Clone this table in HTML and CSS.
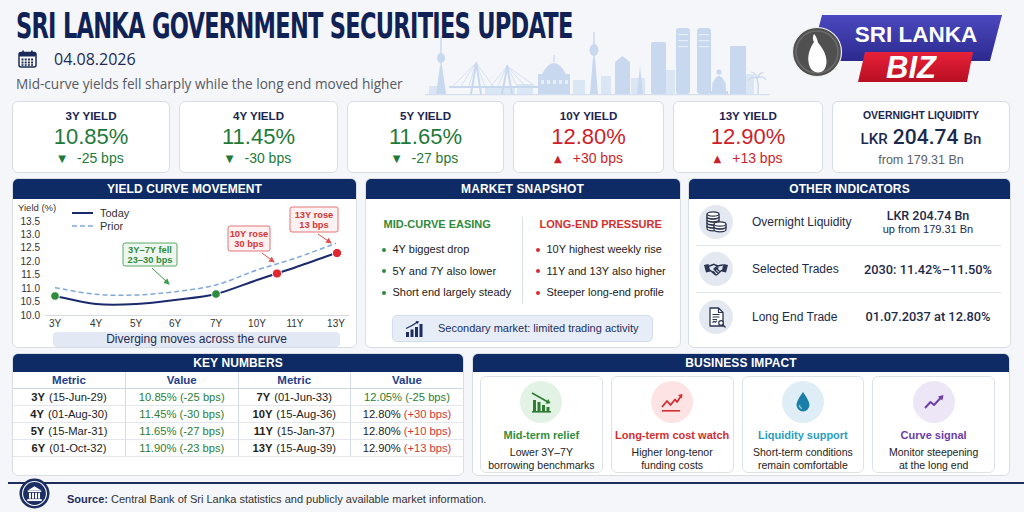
FILE: index.html
```html
<!DOCTYPE html>
<html lang="en">
<head>
<meta charset="utf-8">
<title>Sri Lanka Government Securities Update</title>
<link rel="stylesheet" href="styles.css">
</head>
<body>
<header class="top">
  <h1 class="title">SRI LANKA GOVERNMENT SECURITIES UPDATE</h1>
  <div class="date-row">
    <svg class="cal" width="19" height="18" viewBox="0 0 19 18">
      <rect x="1" y="2.5" width="17" height="14.5" rx="2" fill="#fff" stroke="#1b2a5a" stroke-width="1.5"/>
      <rect x="1" y="2.5" width="17" height="4" rx="1.5" fill="#1b2a5a"/>
      <rect x="4.3" y="0.5" width="1.6" height="4" fill="#1b2a5a"/>
      <rect x="13.1" y="0.5" width="1.6" height="4" fill="#1b2a5a"/>
      <g fill="#1b2a5a">
        <rect x="3.5" y="8.5" width="2" height="2"/><rect x="6.7" y="8.5" width="2" height="2"/><rect x="9.9" y="8.5" width="2" height="2"/><rect x="13.1" y="8.5" width="2" height="2"/>
        <rect x="3.5" y="11.5" width="2" height="2"/><rect x="6.7" y="11.5" width="2" height="2"/><rect x="9.9" y="11.5" width="2" height="2"/><rect x="13.1" y="11.5" width="2" height="2"/>
        <rect x="3.5" y="14.2" width="2" height="1.6"/><rect x="6.7" y="14.2" width="2" height="1.6"/><rect x="9.9" y="14.2" width="2" height="1.6"/><rect x="13.1" y="14.2" width="2" height="1.6"/>
      </g>
    </svg>
    <span class="date">04.08.2026</span>
  </div>
  <p class="subtitle">Mid-curve yields fell sharply while the long end moved higher</p>

  <svg class="skyline" width="345" height="90" viewBox="0 0 345 90">
    <g fill="#dbe6f4">
      <rect x="92" y="78" width="16" height="10"/>
      <rect x="148" y="74" width="12" height="14"/>
      <rect x="176" y="70" width="10" height="18"/>
      <rect x="206" y="72" width="14" height="16"/>
      <rect x="240" y="64" width="10" height="24"/>
      <rect x="287" y="76" width="14" height="12"/>
      <rect x="320" y="68" width="9" height="20"/>
      <rect x="4" y="80" width="8" height="8"/>
      <rect x="60" y="82" width="30" height="6"/>
    </g>
    <g fill="#c8d8ee">
      <rect x="15.3" y="30" width="1.4" height="58"/>
      <ellipse cx="16" cy="52" rx="4" ry="5"/>
      <path d="M11 88 L15 60 h2 L21 88z"/>
      <path d="M45 88 L50.5 56 h1.5 L57 88 h-2 L51.2 63 L47 88z"/>
      <path d="M76 88 L81.5 59 h1.5 L88 88 h-2 L82.2 66 L78 88z"/>
      <rect x="24" y="80" width="94" height="2"/>
      <rect x="113" y="68" width="32" height="20"/>
      <path d="M117 68 Q129 46 141 68z"/>
      <rect x="128.4" y="49" width="1.2" height="7"/>
      <rect x="168.3" y="26" width="1.4" height="62"/>
      <ellipse cx="169" cy="44" rx="4.5" ry="6"/>
      <path d="M165 88 L168 52 h2 L173 88z"/>
      <path d="M190 88 V56 L197.5 50 L205 56 V88z"/>
      <path d="M212 88 L215 60 L218 88z"/>
      <rect x="226" y="36" width="15" height="52" rx="2"/>
      <rect x="251" y="22" width="14" height="66" rx="3"/>
      <rect x="272" y="22" width="14" height="66" rx="3"/>
      <circle cx="294" cy="66" r="2.6"/>
      <path d="M287 86 Q287 72 294 69.5 Q301 72 301 86z"/>
      <rect x="285" y="85" width="18" height="3"/>
      <rect x="305" y="40" width="16" height="48"/>
    </g>
    <g stroke="#c8d8ee" stroke-width="0.7" fill="none">
      <path d="M51 57 L28 80 M51 57 L36 80 M51 57 L44 80 M51 57 L60 80 M51 57 L68 80"/>
      <path d="M82 60 L66 80 M82 60 L73 80 M82 60 L92 80 M82 60 L100 80 M82 60 L110 80"/>
      <path d="M333 88 Q334 80 332 72" stroke-width="1.4"/>
      <path d="M332 72 Q326 70 323 75 M332 72 Q338 69 341 74 M332 72 Q330 66 326 66 M332 72 Q335 66 339 67" stroke-width="1.2"/>
    </g>
    <g fill="#e6eef8">
      <rect x="253" y="28" width="10" height="1.2"/><rect x="253" y="34" width="10" height="1.2"/><rect x="253" y="40" width="10" height="1.2"/>
      <rect x="274" y="28" width="10" height="1.2"/><rect x="274" y="34" width="10" height="1.2"/><rect x="274" y="40" width="10" height="1.2"/>
      <rect x="116" y="74" width="3" height="4"/><rect x="122" y="74" width="3" height="4"/><rect x="128" y="74" width="3" height="4"/><rect x="134" y="74" width="3" height="4"/><rect x="140" y="74" width="3" height="4"/>
    </g>
    <rect x="0" y="88" width="345" height="1.2" fill="#d3def0"/>
  </svg>

  <svg class="logo" width="220" height="74" viewBox="0 0 220 74">
    <defs>
      <linearGradient id="gBlue" x1="0" y1="0" x2="0" y2="1">
        <stop offset="0" stop-color="#4b48c0"/>
        <stop offset="1" stop-color="#2c2a8e"/>
      </linearGradient>
      <linearGradient id="gRed" x1="0" y1="0" x2="0" y2="1">
        <stop offset="0" stop-color="#e8213a"/>
        <stop offset="1" stop-color="#b80f22"/>
      </linearGradient>
    </defs>
    <polygon points="32,3 212,3 200,49 20,49" fill="url(#gBlue)"/>
    <polygon points="75,40 183,40 177,70 68,70" fill="url(#gRed)"/>
    <circle cx="27" cy="40" r="24.5" fill="#505050" stroke="#f0f0f0" stroke-width="1.2"/>
    <circle cx="27" cy="40" r="21" fill="none" stroke="#6c6c6c" stroke-width="1.5"/>
    <path d="M24 22 C22.5 24.5 22.5 28 24 30 C20 35.5 17.5 43 18.5 50 C19.5 57 23.5 60.5 28 60.5 C33.5 60.5 36.5 56 36.5 49.5 C36.5 42 32 35.5 28 30.5 C27 26.5 26 24 24 22 Z" fill="#fff"/>
    <text x="126" y="30" class="logo-top">SRI LANKA</text>
    <text x="121" y="66" class="logo-biz">BIZ</text>
  </svg>
</header>

<section class="kpis">
  <div class="kpi">
    <div class="kpi-label">3Y YIELD</div>
    <div class="kpi-value down">10.85%</div>
    <div class="kpi-change down"><span class="tri">▼</span>-25 bps</div>
  </div>
  <div class="kpi">
    <div class="kpi-label">4Y YIELD</div>
    <div class="kpi-value down">11.45%</div>
    <div class="kpi-change down"><span class="tri">▼</span>-30 bps</div>
  </div>
  <div class="kpi">
    <div class="kpi-label">5Y YIELD</div>
    <div class="kpi-value down">11.65%</div>
    <div class="kpi-change down"><span class="tri">▼</span>-27 bps</div>
  </div>
  <div class="kpi">
    <div class="kpi-label">10Y YIELD</div>
    <div class="kpi-value up">12.80%</div>
    <div class="kpi-change up"><span class="tri">▲</span>+30 bps</div>
  </div>
  <div class="kpi">
    <div class="kpi-label">13Y YIELD</div>
    <div class="kpi-value up">12.90%</div>
    <div class="kpi-change up"><span class="tri">▲</span>+13 bps</div>
  </div>
  <div class="kpi">
    <div class="kpi-label small">OVERNIGHT LIQUIDITY</div>
    <div class="kpi-value navy"><span class="unit">LKR</span> 204.74 <span class="unit">Bn</span></div>
    <div class="kpi-sub">from 179.31 Bn</div>
  </div>
</section>

<section class="row2">
  <div class="panel">
    <div class="panel-head">YIELD CURVE MOVEMENT</div>
    <svg class="chart" width="343" height="133" viewBox="1 1 343 133">
      <defs>
        <marker id="arG" viewBox="0 0 6 6" refX="5" refY="3" markerWidth="6" markerHeight="6" orient="auto">
          <path d="M0 0 L6 3 L0 6z" fill="#3e9a4c"/>
        </marker>
        <marker id="arR" viewBox="0 0 6 6" refX="5" refY="3" markerWidth="6" markerHeight="6" orient="auto">
          <path d="M0 0 L6 3 L0 6z" fill="#e05050"/>
        </marker>
      </defs>
      <text class="ax-title" x="6" y="13">Yield (%)</text>
      <g class="ylab">
        <text x="28" y="26.5">13.5</text>
        <text x="28" y="39.9">13.0</text>
        <text x="28" y="53.4">12.5</text>
        <text x="28" y="66.8">12.0</text>
        <text x="28" y="80.2">11.5</text>
        <text x="28" y="93.6">11.0</text>
        <text x="28" y="107.1">10.5</text>
        <text x="28" y="120.5">10.0</text>
      </g>
      <line x1="33" y1="117.5" x2="337" y2="117.5" class="axis"/>
      <g class="xlab">
        <text x="43" y="128.5">3Y</text>
        <text x="84" y="128.5">4Y</text>
        <text x="124" y="128.5">5Y</text>
        <text x="163" y="128.5">6Y</text>
        <text x="204" y="128.5">7Y</text>
        <text x="245" y="128.5">10Y</text>
        <text x="283" y="128.5">11Y</text>
        <text x="324" y="128.5">13Y</text>
      </g>
      <line x1="60" y1="15" x2="81" y2="15" class="l-today"/>
      <text x="88" y="19" class="legend">Today</text>
      <line x1="60" y1="28" x2="81" y2="28" class="l-prior"/>
      <text x="88" y="32" class="legend">Prior</text>

      <path class="l-prior" d="M43,89.7 C49.8,90.8 70.5,95.1 84,96.3 C97.5,97.5 110.8,97.4 124,97 C137.2,96.6 149.7,95.4 163,93.7 C176.3,92 190.3,90.6 204,87 C217.7,83.4 231.8,76.5 245,72 C258.2,67.6 269.8,64.8 283,60.3 C296.2,55.8 317.2,47.8 324,45.3"/>
      <path class="l-today" d="M43,98 C49.8,99.3 70.5,104.7 84,106 C97.5,107.3 110.8,106.7 124,106 C137.2,105.3 149.7,103.7 163,102 C176.3,100.3 190.3,99.3 204,96 C217.7,92.7 231.8,86.4 245,82 C258.2,77.6 269.8,74 283,69.5 C296.2,65 317.2,57.4 324,55"/>
      <circle cx="43" cy="98" r="4.3" class="dot-g"/>
      <circle cx="204" cy="96" r="4.3" class="dot-g"/>
      <circle cx="265" cy="75.5" r="4.6" class="dot-r"/>
      <circle cx="325" cy="55" r="4.6" class="dot-r"/>

      <rect x="111" y="45" width="54" height="23" rx="2" class="box-g"/>
      <text x="138" y="54.5" class="ann g">3Y–7Y fell</text>
      <text x="138" y="65" class="ann g">23–30 bps</text>
      <line x1="140" y1="70" x2="157" y2="86" class="arr-g" marker-end="url(#arG)"/>

      <rect x="216" y="28" width="42" height="25" rx="2" class="box-r"/>
      <text x="237" y="38.5" class="ann r">10Y rose</text>
      <text x="237" y="49" class="ann r">30 bps</text>
      <line x1="250" y1="55" x2="262" y2="64" class="arr-r" marker-end="url(#arR)"/>

      <rect x="278" y="9" width="48" height="25" rx="2" class="box-r"/>
      <text x="302" y="19.5" class="ann r">13Y rose</text>
      <text x="302" y="30" class="ann r">13 bps</text>
      <line x1="306" y1="36" x2="319" y2="45" class="arr-r" marker-end="url(#arR)"/>
    </svg>
    <div class="chart-note">Diverging moves across the curve</div>
  </div>

  <div class="panel">
    <div class="panel-head">MARKET SNAPSHOT</div>
    <div class="snap-cols">
      <div class="snap-col">
        <h3 class="snap-h green">MID-CURVE EASING</h3>
        <ul class="bullets green">
          <li>4Y biggest drop</li>
          <li>5Y and 7Y also lower</li>
          <li>Short end largely steady</li>
        </ul>
      </div>
      <div class="snap-col right">
        <h3 class="snap-h red">LONG-END PRESSURE</h3>
        <ul class="bullets red">
          <li>10Y highest weekly rise</li>
          <li>11Y and 13Y also higher</li>
          <li>Steeper long-end profile</li>
        </ul>
      </div>
    </div>
    <div class="snap-pill">
      <svg width="19" height="17" viewBox="0 0 19 17">
        <g fill="#1d2d62">
          <rect x="1" y="12" width="3" height="5"/>
          <rect x="5.5" y="9.5" width="3" height="7.5"/>
          <rect x="10" y="7" width="3" height="10"/>
          <rect x="14.5" y="4" width="3" height="13"/>
        </g>
        <path d="M1 8.5 Q7 6 12.5 2" stroke="#1d2d62" stroke-width="1.3" fill="none"/>
        <path d="M10.5 1 L14 1.2 L12.6 4.2z" fill="#1d2d62"/>
      </svg>
      <span>Secondary market: limited trading activity</span>
    </div>
  </div>

  <div class="panel">
    <div class="panel-head">OTHER INDICATORS</div>
    <div class="ind-row">
      <div class="ind-icon">
        <svg width="34" height="34" viewBox="0 0 34 34">
          <g fill="#fff" stroke="#2b3550" stroke-width="1.2">
            <path d="M8 21 v2.6 a6 2.2 0 0 0 12 0 V21"/><ellipse cx="14" cy="21" rx="6" ry="2.2"/>
            <path d="M8 18 v2.6 a6 2.2 0 0 0 12 0 V18"/><ellipse cx="14" cy="18" rx="6" ry="2.2"/>
            <path d="M8 15 v2.6 a6 2.2 0 0 0 12 0 V15"/><ellipse cx="14" cy="15" rx="6" ry="2.2"/>
            <path d="M8 12 v2.6 a6 2.2 0 0 0 12 0 V12"/><ellipse cx="14" cy="12" rx="6" ry="2.2"/>
            <path d="M8 9 v2.6 a6 2.2 0 0 0 12 0 V9"/><ellipse cx="14" cy="9" rx="6" ry="2.2"/>
            <path d="M15 22 v2.6 a6 2.2 0 0 0 12 0 V22"/><ellipse cx="21" cy="22" rx="6" ry="2.2"/>
            <path d="M15 19 v2.6 a6 2.2 0 0 0 12 0 V19"/><ellipse cx="21" cy="19" rx="6" ry="2.2"/>
          </g>
        </svg>
      </div>
      <div class="ind-label">Overnight Liquidity</div>
      <div class="ind-value">LKR 204.74 Bn<span class="ind-sub">up from 179.31 Bn</span></div>
    </div>
    <div class="ind-row">
      <div class="ind-icon">
        <svg width="34" height="34" viewBox="0 0 34 34">
          <polygon points="5,13 9.5,12 11.5,19.5 7,20.5" fill="#2b3550"/>
          <polygon points="29,13 24.5,12 22.5,19.5 27,20.5" fill="#2b3550"/>
          <g stroke="#2b3550" stroke-width="1.5" fill="none" stroke-linecap="round" stroke-linejoin="round">
            <path d="M10.5 14 L15 12.3 L18.5 14 L23.5 13"/>
            <path d="M18.5 14 L15.5 16.5 Q14.5 17.5 16 17.5 L19 15.8"/>
            <path d="M11.5 18.5 L16 22.5 Q17 23.3 18 22.5 L22.5 18.5"/>
            <path d="M14 19.5 l2 1.8 M16 18.3 l2.2 2 M18.2 17.2 l2 1.8"/>
          </g>
        </svg>
      </div>
      <div class="ind-label">Selected Trades</div>
      <div class="ind-value big">2030: 11.42%–11.50%</div>
    </div>
    <div class="ind-row">
      <div class="ind-icon">
        <svg width="34" height="34" viewBox="0 0 34 34">
          <path d="M11 8 h8.5 l4.5 4.5 V26 H11 z" fill="#fff" stroke="#2b3550" stroke-width="1.3" stroke-linejoin="round"/>
          <path d="M19.5 8 V12.5 H24" fill="none" stroke="#2b3550" stroke-width="1.2"/>
          <path d="M13.5 14.5 h7 M13.5 17 h7 M13.5 19.5 h4.5 M13.5 22.5 l1.5 -1.2 l1.3 1 l1.8 -1.6" stroke="#2b3550" stroke-width="1.1" fill="none"/>
          <circle cx="22" cy="23" r="2.3" fill="#fff" stroke="#2b3550" stroke-width="1.2"/>
          <path d="M23.7 24.7 L26 27" stroke="#2b3550" stroke-width="1.5" stroke-linecap="round"/>
        </svg>
      </div>
      <div class="ind-label">Long End Trade</div>
      <div class="ind-value big">01.07.2037 at 12.80%</div>
    </div>
  </div>
</section>

<section class="row3">
  <div class="panel">
    <div class="panel-head short">KEY NUMBERS</div>
    <table class="kn">
      <thead>
        <tr><th>Metric</th><th>Value</th><th>Metric</th><th>Value</th></tr>
      </thead>
      <tbody>
        <tr><td><b>3Y</b>(15-Jun-29)</td><td class="g">10.85% (-25 bps)</td><td><b>7Y</b>(01-Jun-33)</td><td class="g">12.05% (-25 bps)</td></tr>
        <tr><td><b>4Y</b>(01-Aug-30)</td><td class="g">11.45% (-30 bps)</td><td><b>10Y</b>(15-Aug-36)</td><td>12.80% <span class="r">(+30 bps)</span></td></tr>
        <tr><td><b>5Y</b>(15-Mar-31)</td><td class="g">11.65% (-27 bps)</td><td><b>11Y</b>(15-Jan-37)</td><td>12.80% <span class="r">(+10 bps)</span></td></tr>
        <tr><td><b>6Y</b>(01-Oct-32)</td><td class="g">11.90% (-23 bps)</td><td><b>13Y</b>(15-Aug-39)</td><td>12.90% <span class="r">(+13 bps)</span></td></tr>
      </tbody>
    </table>
  </div>

  <div class="panel">
    <div class="panel-head short">BUSINESS IMPACT</div>
    <div class="bi-cards">
      <div class="bi-card">
        <div class="bi-icon c-green">
          <svg width="30" height="30" viewBox="0 0 30 30">
            <g fill="#2e7d32">
              <rect x="7" y="13" width="3" height="11"/>
              <rect x="11.5" y="15" width="3" height="9"/>
              <rect x="16" y="18" width="3" height="6"/>
              <rect x="20.5" y="20" width="3" height="4"/>
              <rect x="6" y="24" width="19" height="1.6"/>
            </g>
            <path d="M6 6 L22 15" stroke="#2e7d32" stroke-width="1.6" fill="none"/>
            <path d="M19.5 16.8 L24.5 16.3 L22.3 12z" fill="#2e7d32"/>
          </svg>
        </div>
        <div class="bi-title green">Mid-term relief</div>
        <div class="bi-desc">Lower 3Y–7Y<br>borrowing benchmarks</div>
      </div>
      <div class="bi-card">
        <div class="bi-icon c-red">
          <svg width="30" height="30" viewBox="0 0 30 30">
            <path d="M5 20 L10 14 L13.5 18 L18 12.5 L20 15 L24 9" stroke="#d32f2f" stroke-width="1.8" fill="none" stroke-linejoin="round"/>
            <path d="M21 8 L25.5 7 L25 11.5z" fill="#d32f2f"/>
            <rect x="5" y="23" width="18" height="1.6" fill="#d32f2f"/>
          </svg>
        </div>
        <div class="bi-title red">Long-term cost watch</div>
        <div class="bi-desc">Higher long-tenor<br>funding costs</div>
      </div>
      <div class="bi-card">
        <div class="bi-icon c-blue">
          <svg width="30" height="30" viewBox="0 0 30 30">
            <path d="M15 5 C15 5 8.5 13.5 8.5 18 A6.5 6.5 0 0 0 21.5 18 C21.5 13.5 15 5 15 5 Z" fill="#1a7fa8"/>
            <path d="M11.5 18 A3.5 3.5 0 0 0 14 21.5" stroke="#8fd0e8" stroke-width="1.2" fill="none"/>
          </svg>
        </div>
        <div class="bi-title blue">Liquidity support</div>
        <div class="bi-desc">Short-term conditions<br>remain comfortable</div>
      </div>
      <div class="bi-card">
        <div class="bi-icon c-purple">
          <svg width="30" height="30" viewBox="0 0 30 30">
            <path d="M6 21 L11.5 15 L15 18 L22 10.5" stroke="#6a3da8" stroke-width="1.9" fill="none" stroke-linejoin="round"/>
            <path d="M19 9.5 L24.5 8 L23.3 13.5z" fill="#6a3da8"/>
          </svg>
        </div>
        <div class="bi-title purple">Curve signal</div>
        <div class="bi-desc">Monitor steepening<br>at the long end</div>
      </div>
    </div>
  </div>
</section>

<footer class="foot">
  <svg class="bank" width="31" height="31" viewBox="0 0 32 32">
    <circle cx="16" cy="16" r="15.5" fill="#1b2d62"/>
    <circle cx="16" cy="16" r="12.3" fill="none" stroke="#fff" stroke-width="1.1"/>
    <polygon points="9,13 16,8.5 23,13" fill="#fff"/>
    <rect x="9" y="13" width="14" height="1.5" fill="#fff"/>
    <g fill="#fff">
      <rect x="10.3" y="15.3" width="2" height="6"/>
      <rect x="13.5" y="15.3" width="2" height="6"/>
      <rect x="16.6" y="15.3" width="2" height="6"/>
      <rect x="19.7" y="15.3" width="2" height="6"/>
    </g>
    <rect x="8.5" y="21.8" width="15" height="2" fill="#fff"/>
  </svg>
  <p class="source"><b>Source:</b> Central Bank of Sri Lanka statistics and publicly available market information.</p>
</footer>
</body>
</html>
```

FILE: styles.css
```css
* { box-sizing: border-box; }

html, body {
  margin: 0;
  padding: 0;
}

body {
  width: 1024px;
  height: 512px;
  overflow: hidden;
  background: #f5f6f9;
  font-family: "Liberation Sans", Arial, sans-serif;
  color: #1c2540;
}

/* ---------- header ---------- */
.top {
  display: grid;
  grid-template-columns: 409px 345px 1fr;
  grid-template-rows: 40px 26px 24px;
  height: 101px;
  padding: 6px 0 0 16px;
}

.title {
  grid-column: 1 / 3;
  grid-row: 1;
  margin: 0;
  font-family: "Liberation Sans Narrow", "DejaVu Sans Condensed", sans-serif;
  font-weight: 700;
  font-size: 35px;
  line-height: 40px;
  letter-spacing: -1px;
  color: #102255;
  white-space: nowrap;
  transform: scaleX(0.715);
  transform-origin: left center;
  position: relative;
  z-index: 1;
}

.date-row {
  grid-column: 1;
  grid-row: 2;
  display: flex;
  align-items: center;
  gap: 17px;
  padding-left: 2px;
}

.date {
  font-family: "Open Sans", sans-serif;
  font-size: 16px;
  font-weight: 500;
  color: #1b2a5a;
}

.subtitle {
  grid-column: 1 / 3;
  grid-row: 3;
  margin: 0;
  font-family: "Open Sans", sans-serif;
  font-size: 13.6px;
  line-height: 24px;
  color: #555a63;
  white-space: nowrap;
  position: relative;
  z-index: 1;
}

.skyline {
  grid-column: 2;
  grid-row: 1 / 4;
  display: block;
}

.logo {
  grid-column: 3;
  grid-row: 1 / 4;
  margin: 6px 0 0 20px;
  display: block;
}

.logo-top {
  font-family: "Liberation Sans", Arial, sans-serif;
  font-weight: 700;
  font-size: 22.5px;
  fill: #ffffff;
  text-anchor: middle;
}

.logo-biz {
  font-family: "Liberation Sans", Arial, sans-serif;
  font-weight: 700;
  font-style: italic;
  font-size: 31px;
  fill: #ffffff;
  text-anchor: middle;
}

/* ---------- KPI cards ---------- */
.kpis {
  display: grid;
  grid-template-columns: 158px 159px 157px 151px 150px 1fr;
  column-gap: 9px;
  height: 72px;
  margin: 0 14px 0 12px;
}

.kpi {
  background: #fff;
  border: 1px solid #d8dde5;
  border-radius: 6px;
  display: flex;
  flex-direction: column;
  align-items: center;
  padding-top: 7px;
}

.kpi-label {
  font-weight: 700;
  font-size: 11.6px;
  line-height: 14px;
  color: #1b2550;
}

.kpi-label.small {
  font-size: 10.4px;
}

.kpi-value {
  font-size: 22px;
  line-height: 22px;
  margin-top: 3px;
}

.kpi-value.navy {
  font-family: Roboto, "Liberation Sans", sans-serif;
  font-weight: 500;
  font-size: 21px;
  color: #1b2a4e;
}

.kpi-value .unit {
  font-size: 15px;
}

.kpi-change {
  font-size: 14px;
  line-height: 16px;
  margin-top: 2px;
}

.kpi-sub {
  font-size: 12.5px;
  line-height: 16px;
  margin-top: 2px;
  color: #5a5f68;
}

.tri {
  font-family: "DejaVu Sans", sans-serif;
  font-size: 10px;
  margin-right: 11px;
  position: relative;
  top: -1px;
}

.down { color: #1f7a3a; }
.up { color: #cc1f2b; }

/* ---------- panels ---------- */
.row2 {
  display: grid;
  grid-template-columns: 345px 316px 1fr;
  column-gap: 7.5px;
  height: 170px;
  margin: 5px 13px 0 12px;
}

.row3 {
  display: grid;
  grid-template-columns: 452px 1fr;
  column-gap: 8px;
  height: 123px;
  margin: 5px 14px 0 12px;
}

.panel {
  background: #fff;
  border: 1px solid #d9dee6;
  border-radius: 6px;
  overflow: hidden;
  display: flex;
  flex-direction: column;
}

.panel-head {
  flex: none;
  height: 20px;
  line-height: 20px;
  background: #0e2b66;
  color: #fff;
  font-weight: 700;
  font-size: 12px;
  text-align: center;
  letter-spacing: 0.1px;
}

.panel-head.short {
  height: 18px;
  line-height: 18px;
}

/* chart */
.chart {
  display: block;
  flex: none;
}

.chart text {
  font-family: "Liberation Sans", Arial, sans-serif;
}

.ax-title { font-size: 9.5px; fill: #333; }
.ylab text { font-size: 10px; fill: #333; text-anchor: end; }
.xlab text { font-size: 10px; fill: #333; text-anchor: middle; }
.legend { font-size: 11px; fill: #333; }

.axis { stroke: #d5dae2; stroke-width: 1; }

.l-today { fill: none; stroke: #1a2a6c; stroke-width: 2; }
.l-prior { fill: none; stroke: #7fa9de; stroke-width: 1.5; stroke-dasharray: 5 3; }

.dot-g { fill: #2e8b3e; stroke: #fff; stroke-width: 1; }
.dot-r { fill: #e0262e; stroke: #fff; stroke-width: 1; }

.box-g { fill: #eef7ef; stroke: #4a9f55; stroke-width: 0.9; }
.box-r { fill: #fdf1f1; stroke: #e06666; stroke-width: 0.9; }

.ann { font-size: 9.3px; font-weight: 700; text-anchor: middle; }
.ann.g { fill: #2e8b3e; }
.ann.r { fill: #d33636; }

.arr-g { stroke: #3e9a4c; stroke-width: 1; }
.arr-r { stroke: #e05050; stroke-width: 1; }

.chart-note {
  flex: none;
  height: 15px;
  line-height: 15px;
  margin-left: 40px;
  width: 287px;
  background: #e3e9f4;
  border-radius: 4px;
  text-align: center;
  font-size: 12px;
  color: #1d2a55;
}

/* market snapshot */
.snap-cols {
  display: grid;
  grid-template-columns: 156px 1fr;
  margin-top: 18px;
}

.snap-col {
  padding-left: 16px;
}

.snap-col.right {
  border-left: 1px solid #d9dde4;
  padding-left: 13px;
}

.snap-h {
  margin: 0 0 0 2px;
  font-size: 11px;
  line-height: 14px;
  font-weight: 700;
}

.snap-col.right .snap-h { margin-left: 4px; }

.snap-h.green { color: #2e8b3e; }
.snap-h.red { color: #d32f2f; }

.bullets {
  list-style: none;
  margin: 8px 0 0 0;
  padding: 0;
}

.bullets li {
  display: flex;
  align-items: center;
  gap: 7px;
  font-size: 11px;
  line-height: 21.5px;
  color: #222;
  white-space: nowrap;
}

.bullets li::before {
  content: "";
  width: 4px;
  height: 4px;
  border-radius: 50%;
  flex: none;
}

.bullets.green li::before { background: #2e8b3e; }
.bullets.red li::before { background: #d32f2f; }

.snap-pill {
  width: 261px;
  height: 27px;
  margin: 11px auto 0;
  display: flex;
  align-items: center;
  gap: 14px;
  padding-left: 12px;
  background: #e7edf7;
  border: 1px solid #d3ddec;
  border-radius: 5px;
  font-size: 11px;
  color: #1d2d62;
}

/* other indicators */
.ind-row {
  display: grid;
  grid-template-columns: 34px 1fr 146px;
  align-items: center;
  height: 47px;
  margin: 0 9px 0 7px;
  padding-left: 3px;
  border-bottom: 1px solid #dfe3ea;
}

.ind-row:last-child { border-bottom: none; }

.ind-icon {
  width: 34px;
  height: 34px;
  border-radius: 50%;
  background: #e4e9f1;
}

.ind-icon svg { display: block; }

.ind-label {
  padding-left: 19px;
  font-size: 12px;
  color: #1d2a4a;
  white-space: nowrap;
}

.ind-value {
  font-family: Roboto, "Liberation Sans", sans-serif;
  font-weight: 500;
  font-size: 12.5px;
  line-height: 15px;
  color: #1d2a4a;
  text-align: center;
  display: flex;
  flex-direction: column;
  white-space: nowrap;
}

.ind-value.big { font-size: 12.8px; }

.ind-sub {
  font-family: "Liberation Sans", Arial, sans-serif;
  font-weight: 400;
  font-size: 11px;
  line-height: 13px;
}

/* key numbers */
.kn {
  width: 100%;
  border-collapse: collapse;
  table-layout: fixed;
}

.kn th {
  height: 16px;
  padding: 0;
  font-size: 11.5px;
  font-weight: 700;
  color: #23408a;
  border-bottom: 1px solid #cfd6e2;
  border-left: 1px solid #d5dbe4;
}

.kn td {
  height: 17px;
  padding: 0;
  text-align: center;
  font-size: 11.2px;
  color: #222;
  border-bottom: 1px solid #e3e6ec;
  border-left: 1px solid #d5dbe4;
  white-space: nowrap;
}

.kn th:first-child, .kn td:first-child { border-left: none; }

.kn td b { margin-right: 4px; }
.kn .g { color: #2e7d32; }
.kn .r { color: #d33636; }

/* business impact */
.bi-cards {
  flex: 1;
  display: grid;
  grid-template-columns: repeat(4, 1fr);
  column-gap: 8px;
  padding: 4px 14px 3px 7px;
}

.bi-card {
  background: #fff;
  border: 1px solid #dde2ea;
  border-radius: 6px;
  display: flex;
  flex-direction: column;
  align-items: center;
  padding-top: 4px;
}

.bi-icon {
  width: 42px;
  height: 42px;
  border-radius: 50%;
  display: flex;
  align-items: center;
  justify-content: center;
}

.c-green { background: #e2f2e5; }
.c-red { background: #fde3e3; }
.c-blue { background: #dfeef6; }
.c-purple { background: #ece6f6; }

.bi-title {
  margin-top: 5px;
  font-size: 11px;
  line-height: 14px;
  font-weight: 700;
  white-space: nowrap;
}

.bi-title.green { color: #2f8f3f; }
.bi-title.red { color: #d22f2f; }
.bi-title.blue { color: #2a9ec0; }
.bi-title.purple { color: #6a3da8; }

.bi-desc {
  margin-top: 4px;
  font-size: 10.5px;
  line-height: 13px;
  text-align: center;
  color: #222;
  white-space: nowrap;
}

/* footer */
.foot {
  margin: 6px 0 0 8px;
  border-top: 2px solid #1c2d5e;
  display: flex;
  align-items: flex-start;
  gap: 17px;
  padding-left: 11px;
}

.bank {
  display: block;
  margin-top: -6px;
  flex: none;
}

.source {
  margin: 8px 0 0 0;
  font-size: 11px;
  line-height: 14px;
  color: #333;
}

.source b {
  color: #1c2d5e;
}
```
